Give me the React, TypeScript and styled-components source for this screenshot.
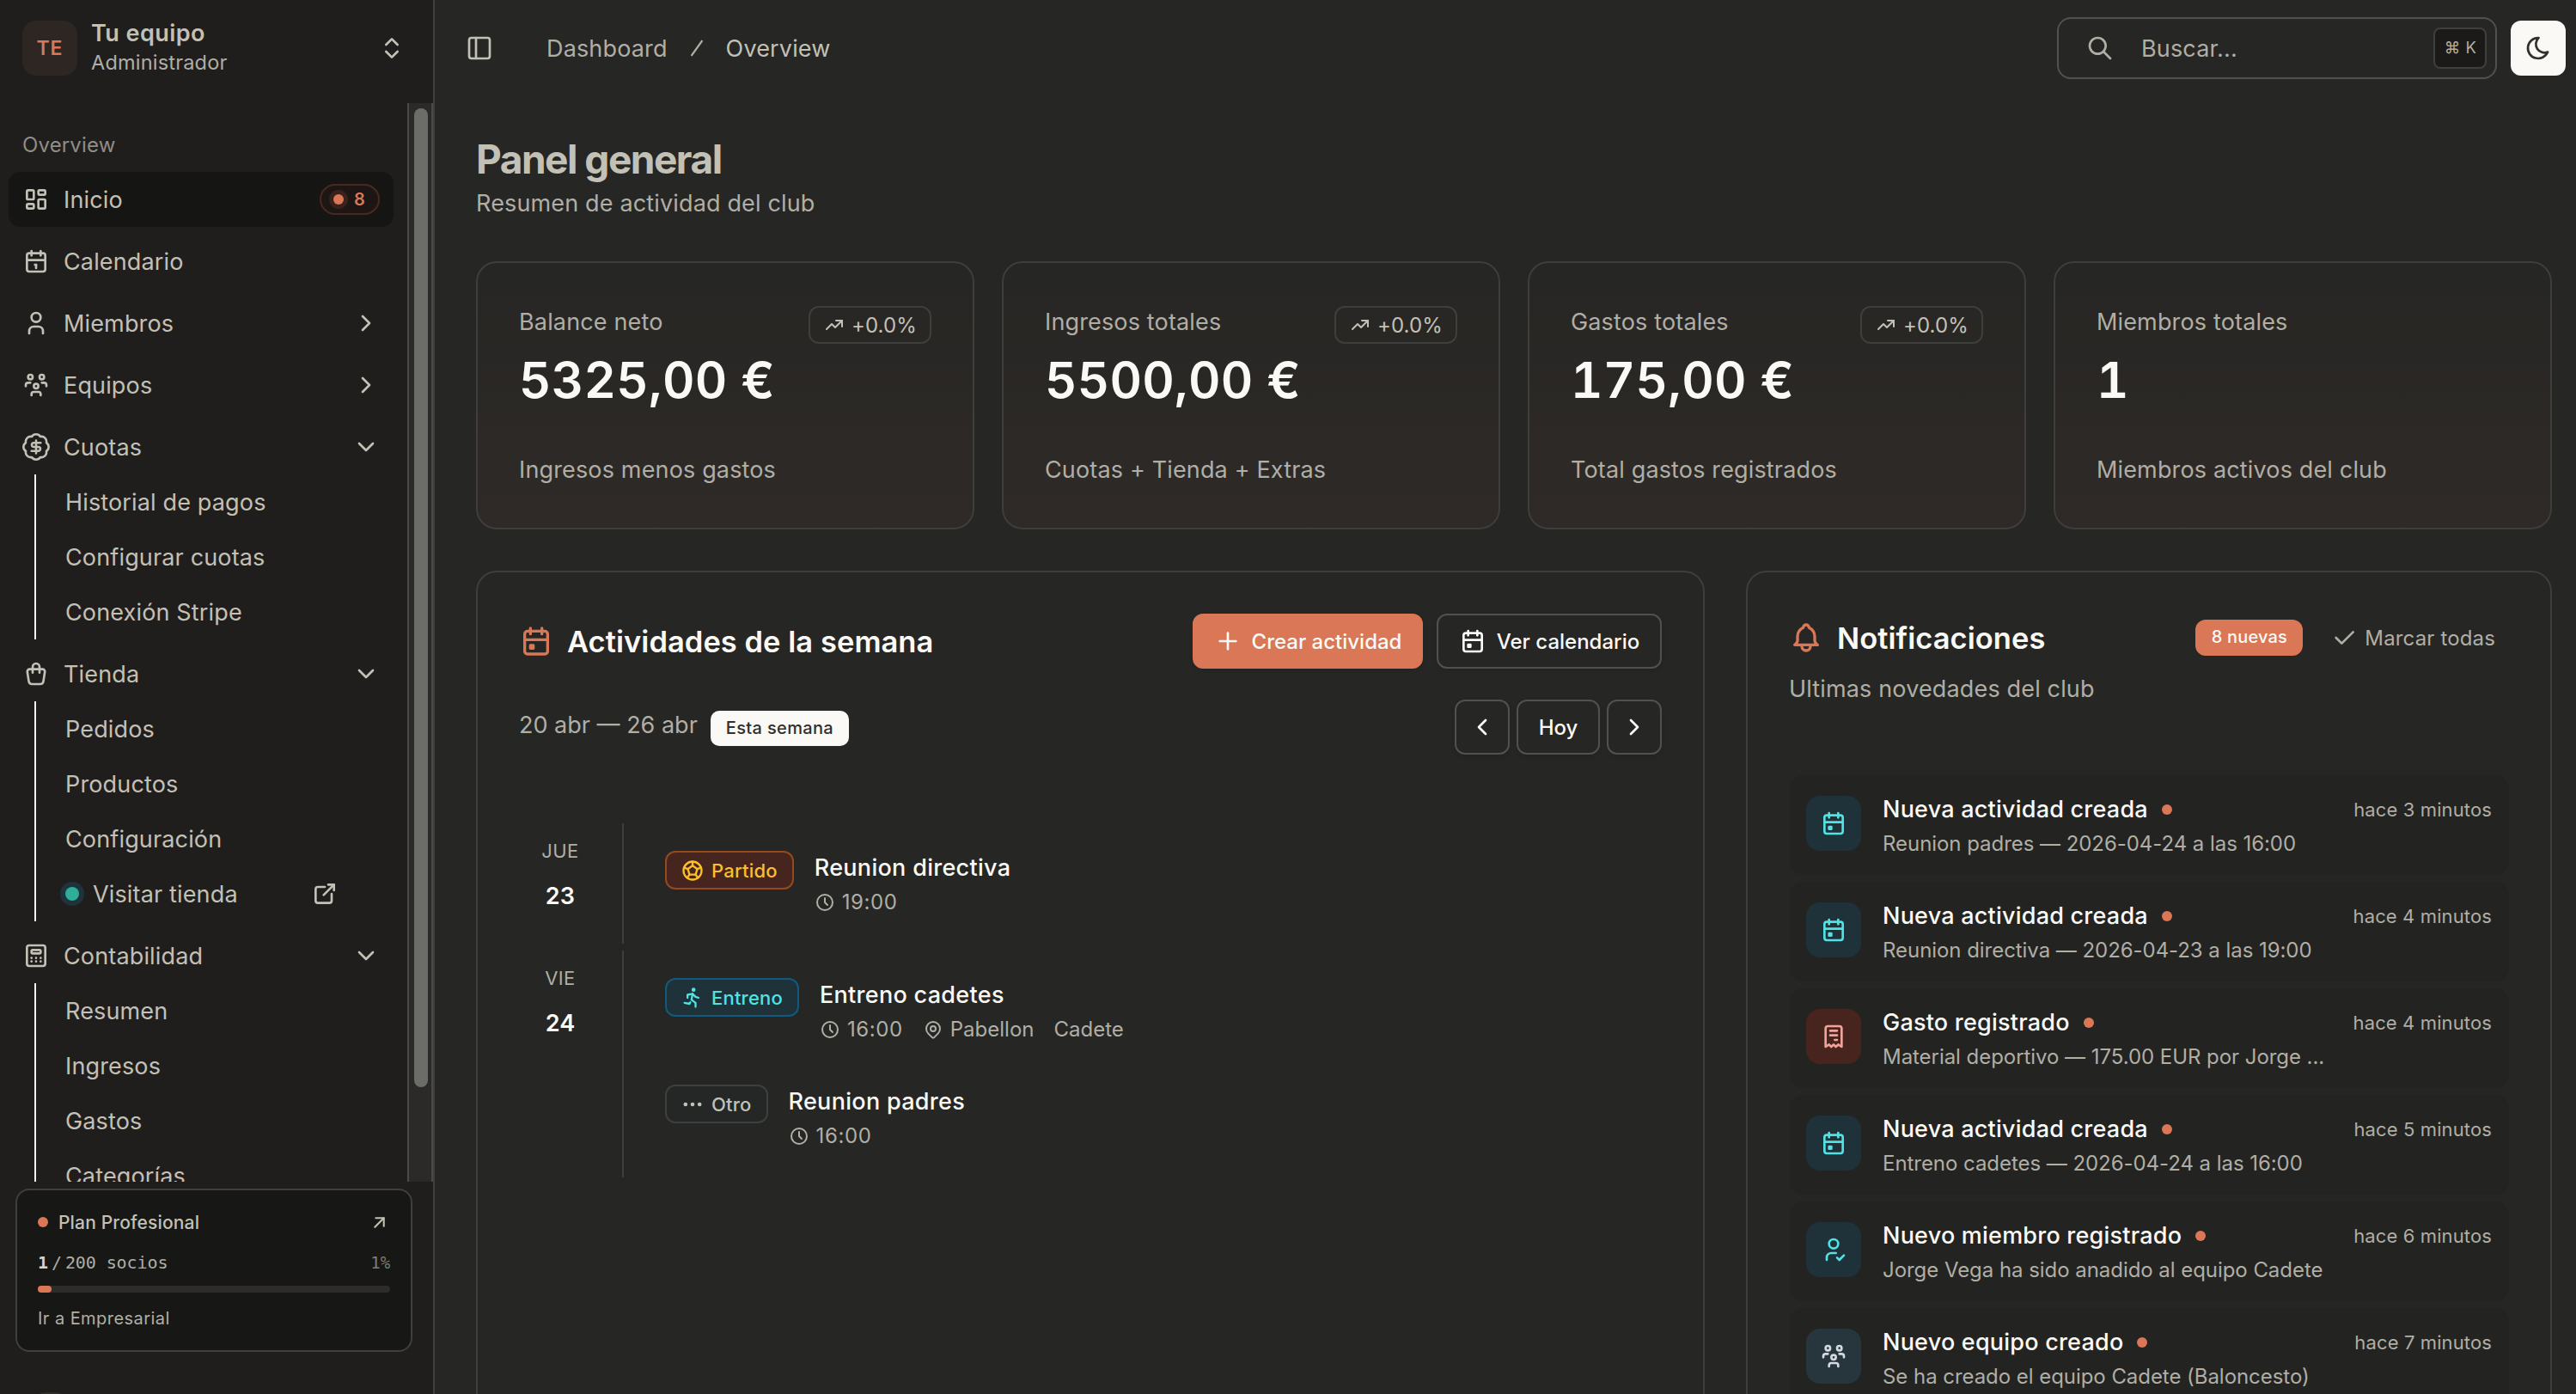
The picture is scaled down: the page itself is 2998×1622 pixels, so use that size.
import React, { ReactNode } from 'react'
import styled, { createGlobalStyle, css } from 'styled-components'
import { ChevronDown, ChevronLeft, ChevronRight, ChevronsUpDown, PanelLeft } from 'lucide-react'
import {
  TbArrowUpRight,
  TbBallFootball,
  TbBell,
  TbCalculator,
  TbCalendar,
  TbCalendarEvent,
  TbCheck,
  TbClock,
  TbDots,
  TbExternalLink,
  TbLayoutDashboard,
  TbMapPin,
  TbMoon,
  TbPlus,
  TbReceipt,
  TbRun,
  TbSearch,
  TbShoppingBag,
  TbSlash,
  TbTrendingUp,
  TbUser,
  TbUserCheck,
  TbUsersGroup,
} from 'react-icons/tb'

type Tone = 'cyan' | 'red' | 'slate'
type Kind = 'match' | 'training' | 'other'

interface NavEntry {
  label: string
  icon: ReactNode
  active?: boolean
  count?: number
  chevron?: 'right' | 'down'
  items?: { label: string; external?: boolean }[]
}

interface Activity {
  kind: Kind
  title: string
  time: string
  place?: string
  team?: string
}

const DollarBadge = () => (
  <svg width={32} height={32} viewBox="0 0 24 24" fill="none" stroke="currentColor" overflow="visible" strokeLinecap="round" strokeLinejoin="round">
    <path
      transform="translate(12 12) scale(1.1) translate(-12 -12)"
      strokeWidth={1.75}
      d="M3.85 8.62a4 4 0 0 1 4.78-4.77 4 4 0 0 1 6.74 0 4 4 0 0 1 4.78 4.78 4 4 0 0 1 0 6.74 4 4 0 0 1-4.77 4.78 4 4 0 0 1-6.75 0 4 4 0 0 1-4.78-4.77 4 4 0 0 1 0-6.76Z"
    />
    <path strokeWidth={1.9} d="M16 8.5h-6a1.75 1.75 0 1 0 0 3.5h4a1.75 1.75 0 1 1 0 3.5H8M12 17.6V6.4" />
  </svg>
)

const nav: NavEntry[] = [
  { label: 'Inicio', icon: <TbLayoutDashboard size={32} />, active: true, count: 8 },
  { label: 'Calendario', icon: <TbCalendar size={32} /> },
  { label: 'Miembros', icon: <TbUser size={32} />, chevron: 'right' },
  { label: 'Equipos', icon: <TbUsersGroup size={32} />, chevron: 'right' },
  {
    label: 'Cuotas',
    icon: <DollarBadge />,
    chevron: 'down',
    items: [{ label: 'Historial de pagos' }, { label: 'Configurar cuotas' }, { label: 'Conexión Stripe' }],
  },
  {
    label: 'Tienda',
    icon: <TbShoppingBag size={32} />,
    chevron: 'down',
    items: [{ label: 'Pedidos' }, { label: 'Productos' }, { label: 'Configuración' }, { label: 'Visitar tienda', external: true }],
  },
  {
    label: 'Contabilidad',
    icon: <TbCalculator size={32} />,
    chevron: 'down',
    items: [{ label: 'Resumen' }, { label: 'Ingresos' }, { label: 'Gastos' }, { label: 'Categorías' }],
  },
]

const stats = [
  { label: 'Balance neto', value: '5325,00 €', note: 'Ingresos menos gastos', trend: '+0.0%' },
  { label: 'Ingresos totales', value: '5500,00 €', note: 'Cuotas + Tienda + Extras', trend: '+0.0%' },
  { label: 'Gastos totales', value: '175,00 €', note: 'Total gastos registrados', trend: '+0.0%' },
  { label: 'Miembros totales', value: '1', note: 'Miembros activos del club' },
]

const days: { name: string; day: number; activities: Activity[] }[] = [
  { name: 'JUE', day: 23, activities: [{ kind: 'match', title: 'Reunion directiva', time: '19:00' }] },
  {
    name: 'VIE',
    day: 24,
    activities: [
      { kind: 'training', title: 'Entreno cadetes', time: '16:00', place: 'Pabellon', team: 'Cadete' },
      { kind: 'other', title: 'Reunion padres', time: '16:00' },
    ],
  },
]

const kinds = {
  match: { label: 'Partido', icon: <TbBallFootball size={28} /> },
  training: { label: 'Entreno', icon: <TbRun size={28} /> },
  other: { label: 'Otro', icon: <TbDots size={28} /> },
}

const notifications: { title: string; text: string; time: string; tone: Tone; icon: ReactNode }[] = [
  { title: 'Nueva actividad creada', text: 'Reunion padres — 2026-04-24 a las 16:00', time: 'hace 3 minutos', tone: 'cyan', icon: <TbCalendarEvent size={32} /> },
  { title: 'Nueva actividad creada', text: 'Reunion directiva — 2026-04-23 a las 19:00', time: 'hace 4 minutos', tone: 'cyan', icon: <TbCalendarEvent size={32} /> },
  { title: 'Gasto registrado', text: 'Material deportivo — 175.00 EUR por Jorge ...', time: 'hace 4 minutos', tone: 'red', icon: <TbReceipt size={32} /> },
  { title: 'Nueva actividad creada', text: 'Entreno cadetes — 2026-04-24 a las 16:00', time: 'hace 5 minutos', tone: 'cyan', icon: <TbCalendarEvent size={32} /> },
  { title: 'Nuevo miembro registrado', text: 'Jorge Vega ha sido anadido al equipo Cadete', time: 'hace 6 minutos', tone: 'cyan', icon: <TbUserCheck size={32} /> },
  { title: 'Nuevo equipo creado', text: 'Se ha creado el equipo Cadete (Baloncesto)', time: 'hace 7 minutos', tone: 'slate', icon: <TbUsersGroup size={32} /> },
]

const Sidebar = () => (
  <SidebarContainer>
    <TeamSwitcher>
      <TeamAvatar>TE</TeamAvatar>
      <TeamText>
        <TeamName>Tu equipo</TeamName>
        <TeamRole>Administrador</TeamRole>
      </TeamText>
      <ChevronsUpDown size={32} />
    </TeamSwitcher>

    <ScrollArea>
      <NavList>
        <NavLabel>Overview</NavLabel>
        {nav.map((entry) => (
          <li key={entry.label}>
            <NavButton $active={entry.active}>
              {entry.icon}
              <span>{entry.label}</span>
              {entry.count && (
                <CountPill>
                  <PulseDot />
                  {entry.count}
                </CountPill>
              )}
              {entry.chevron === 'right' && <ChevronRight size={32} />}
              {entry.chevron === 'down' && <ChevronDown size={32} />}
            </NavButton>
            {entry.items && (
              <SubList>
                {entry.items.map((item) => (
                  <SubItem key={item.label} $external={item.external}>
                    {item.external && <LiveDot />}
                    <span>{item.label}</span>
                    {item.external && <TbExternalLink size={32} />}
                  </SubItem>
                ))}
              </SubList>
            )}
          </li>
        ))}
      </NavList>
      <ScrollTrack>
        <ScrollThumb />
      </ScrollTrack>
    </ScrollArea>

    <PlanCard>
      <PlanHead>
        <Dot />
        <span>Plan Profesional</span>
        <TbArrowUpRight size={25} />
      </PlanHead>
      <PlanUsage>
        <strong>1</strong>
        <span>/</span>
        <span>200 socios</span>
        <em>1%</em>
      </PlanUsage>
      <PlanBar>
        <PlanFill />
      </PlanBar>
      <PlanLink>Ir a Empresarial</PlanLink>
    </PlanCard>
    <UserRow />
  </SidebarContainer>
)

const Header = () => (
  <HeaderBar>
    <PanelLeft size={32} />
    <Breadcrumb>
      <span>Dashboard</span>
      <TbSlash size={28} />
      <Current>Overview</Current>
    </Breadcrumb>
    <SearchBox>
      <TbSearch size={32} />
      <span>Buscar...</span>
      <Kbd>⌘ K</Kbd>
    </SearchBox>
    <ThemeButton>
      <TbMoon size={32} />
    </ThemeButton>
  </HeaderBar>
)

const WeekPanel = () => (
  <Panel>
    <WeekHead>
      <PanelTitle>
        <TbCalendarEvent size={40} />
        Actividades de la semana
      </PanelTitle>
      <ButtonRow $gap={16}>
        <Button $primary $width={268}>
          <TbPlus size={32} />
          Crear actividad
        </Button>
        <Button $width={262}>
          <TbCalendarEvent size={32} />
          Ver calendario
        </Button>
      </ButtonRow>
    </WeekHead>
    <WeekNav>
      <WeekRange>
        20 abr — 26 abr
        <WeekPill>Esta semana</WeekPill>
      </WeekRange>
      <ButtonRow $gap={8}>
        <Button $width={64}>
          <ChevronLeft size={32} />
        </Button>
        <Button $width={97}>Hoy</Button>
        <Button $width={64}>
          <ChevronRight size={32} />
        </Button>
      </ButtonRow>
    </WeekNav>
    <Timeline>
      {days.map(({ name, day, activities }) => (
        <DayBlock key={day}>
          <DayLabel>
            <DayName>{name}</DayName>
            <DayNumber>{day}</DayNumber>
          </DayLabel>
          <DayActivities>
            {activities.map(({ kind, title, time, place, team }) => (
              <ActivityItem key={title}>
                <KindBadge $kind={kind}>
                  {kinds[kind].icon}
                  {kinds[kind].label}
                </KindBadge>
                <div>
                  <ActivityTitle>{title}</ActivityTitle>
                  <ActivityMeta>
                    <Meta $digits>
                      <TbClock size={24} />
                      {time}
                    </Meta>
                    {place && (
                      <Meta>
                        <TbMapPin size={24} />
                        {place}
                      </Meta>
                    )}
                    {team && <Meta>{team}</Meta>}
                  </ActivityMeta>
                </div>
              </ActivityItem>
            ))}
          </DayActivities>
        </DayBlock>
      ))}
    </Timeline>
  </Panel>
)

const NotificationsPanel = () => (
  <Panel>
    <NotifHead>
      <PanelTitle>
        <TbBell size={40} />
        Notificaciones
      </PanelTitle>
      <NewBadge>8 nuevas</NewBadge>
      <MarkAll>
        <TbCheck size={32} />
        Marcar todas
      </MarkAll>
    </NotifHead>
    <NotifSubtitle>Ultimas novedades del club</NotifSubtitle>
    <NotifList>
      {notifications.map(({ title, text, time, tone, icon }, index) => (
        <NotifItem key={index}>
          <NotifIcon $tone={tone}>{icon}</NotifIcon>
          <NotifBody>
            <NotifTitle>
              {title}
              <Dot />
            </NotifTitle>
            <NotifText>{text}</NotifText>
          </NotifBody>
          <NotifTime>{time}</NotifTime>
        </NotifItem>
      ))}
    </NotifList>
  </Panel>
)

const App = () => {
  return (
    <Layout>
      <GlobalStyle />
      <Sidebar />
      <Main>
        <Header />
        <Content>
          <PageTitle>Panel general</PageTitle>
          <PageSubtitle>Resumen de actividad del club</PageSubtitle>
          <StatGrid>
            {stats.map(({ label, value, note, trend }) => (
              <StatCard key={label}>
                <StatLabel>{label}</StatLabel>
                <StatValue>{value}</StatValue>
                <StatNote>{note}</StatNote>
                {trend && (
                  <TrendBadge>
                    <TbTrendingUp size={24} />
                    {trend}
                  </TrendBadge>
                )}
              </StatCard>
            ))}
          </StatGrid>
          <PanelGrid>
            <WeekPanel />
            <NotificationsPanel />
          </PanelGrid>
        </Content>
      </Main>
    </Layout>
  )
}

const GlobalStyle = createGlobalStyle`
  * {
    box-sizing: border-box;
  }

  body {
    margin: 0;
    background: #262624;
    color: #c3c0b6;
    font-family: Inter, 'Liberation Sans', sans-serif;
    font-size: 27px;
    letter-spacing: 0.15px;
    -webkit-font-smoothing: antialiased;
  }

  h1, h2, p, ul {
    margin: 0;
    padding: 0;
  }

  ul {
    list-style: none;
  }

  svg {
    flex: none;
  }
`

const Layout = styled.div`
  display: flex;
  height: 1622px;
  overflow: hidden;
  white-space: nowrap;
`

/* sidebar */
const SidebarContainer = styled.aside`
  display: flex;
  flex-direction: column;
  flex: none;
  width: 506px;
  border-right: 2px solid #3f3f3b;
  background: #1f1e1d;
`
const TeamSwitcher = styled.div`
  display: flex;
  align-items: center;
  flex: none;
  height: 120px;
  padding: 0 32px 8px 26px;
`
const TeamAvatar = styled.div`
  display: flex;
  align-items: center;
  justify-content: center;
  width: 64px;
  height: 64px;
  border-radius: 16px;
  background: #2e2623;
  color: #d97757;
  font-size: 23px;
  font-weight: 600;
  letter-spacing: 1px;
`
const TeamText = styled.div`
  flex: 1;
  padding: 0 0 3px 16px;
`
const TeamName = styled.div`
  font-weight: 600;
  line-height: 36px;
  letter-spacing: 0.45px;
`
const TeamRole = styled.div`
  color: #b0aea5;
  font-size: 23.5px;
  letter-spacing: 0.2px;
  line-height: 32px;
`
const ScrollArea = styled.div`
  display: flex;
  flex: none;
  height: 1255px;
  overflow: hidden;
`
const NavList = styled.ul`
  display: flex;
  flex-direction: column;
  gap: 8px;
  flex: 1;
  padding: 16px 16px 0 10px;
`
const NavLabel = styled.li`
  height: 56px;
  padding-left: 16px;
  color: #8f8d85;
  font-size: 24px;
  line-height: 65px;
`
const NavButton = styled.div<{ $active?: boolean }>`
  display: flex;
  align-items: center;
  gap: 16px;
  height: 64px;
  padding: 0 16px;
  border-radius: 14px;
  background: ${({ $active }) => ($active ? '#151513' : 'transparent')};

  > span {
    flex: 1;
  }
`
const CountPill = styled.div`
  display: flex;
  align-items: center;
  gap: 12px;
  width: 70px;
  height: 36px;
  padding-left: 14px;
  border: 2px solid #4a2822;
  border-radius: 18px;
  background: #1c1715;
  color: #d97757;
  font-size: 20px;
  font-weight: 600;
`
const Dot = styled.i`
  flex: none;
  width: 12px;
  height: 12px;
  border-radius: 50%;
  background: #d97757;
`
const PulseDot = styled(Dot)`
  box-shadow: 0 0 0 5px #3a211b;
`
const SubList = styled.ul`
  margin-left: 30px;
  border-left: 2px solid #f4f2ec;
`
const SubItem = styled.li<{ $external?: boolean }>`
  display: flex;
  align-items: center;
  height: 64px;
  padding: 0 64px 0 34px;

  span {
    flex: 1;
    padding-left: ${({ $external }) => ($external ? 16 : 0)}px;
  }
`
const LiveDot = styled.i`
  width: 16px;
  height: 16px;
  border-radius: 50%;
  background: #2eae98;
  box-shadow: 0 0 0 6px #1e333b;
`
const ScrollTrack = styled.div`
  width: 30px;
  padding: 6px 6px 0;
  border: 2px solid #4b4a46;
  border-width: 0 2px;
  background: #2b2a28;
`
const ScrollThumb = styled.div`
  width: 16px;
  height: 1139px;
  margin: 0 auto;
  border-radius: 8px;
  background: #6c6c69;
`
const PlanCard = styled.section`
  flex: none;
  width: 462px;
  height: 190px;
  margin: 8px 0 0 18px;
  padding: 22px 24px;
  border: 2px solid #3f3f3b;
  border-radius: 16px;
  background: #171715;
`
const PlanHead = styled.div`
  display: flex;
  align-items: center;
  gap: 12px;
  height: 30px;
  font-size: 21px;
  font-weight: 500;
  letter-spacing: 0.15px;

  span {
    flex: 1;
  }
`
const PlanUsage = styled.div`
  display: flex;
  gap: 4px;
  height: 28px;
  margin-top: 18px;
  color: #b0aea5;
  font-family: 'DejaVu Sans Mono', monospace;
  font-size: 20px;
  letter-spacing: -0.1px;
  line-height: 28px;

  strong {
    color: #d6d3c9;
  }

  em {
    margin-left: auto;
    color: #7f7d76;
    font-size: 19px;
    font-style: normal;
  }
`
const PlanBar = styled.div`
  height: 8px;
  margin-top: 13px;
  border-radius: 4px;
  background: #2d2c2a;
`
const PlanFill = styled.div`
  width: 16px;
  height: 8px;
  border-radius: 4px;
  background: #d97757;
`
const PlanLink = styled.div`
  margin-top: 16px;
  color: #b0aea5;
  font-size: 20px;
  letter-spacing: 0.45px;
  line-height: 28px;
`
const UserRow = styled.div`
  flex: none;
  width: 42px;
  height: 42px;
  margin: 47px 0 0 38px;
  border-radius: 16px;
  background: #2e2d2a;
`

/* header */
const Main = styled.main`
  flex: 1;
  min-width: 0;
`
const HeaderBar = styled.header`
  display: flex;
  align-items: center;
  height: 112px;
  padding: 0 12px 0 36px;
`
const Breadcrumb = styled.nav`
  display: flex;
  align-items: center;
  gap: 20px;
  margin-right: auto;
  padding-left: 62px;
  color: #b0aea5;
  letter-spacing: 0.15px;
`
const Current = styled.span`
  color: #c3c0b6;
`
const SearchBox = styled.div`
  display: flex;
  align-items: center;
  width: 512px;
  height: 72px;
  padding: 0 10px 0 32px;
  border: 2px solid #52514d;
  border-radius: 16px;
  color: #b0aea5;

  > span {
    flex: 1;
    padding-left: 32px;
    letter-spacing: 0.15px;
  }
`
const Kbd = styled.kbd`
  width: 62px;
  height: 48px;
  padding-left: 1px;
  border: 2px solid #3f3f3b;
  border-radius: 8px;
  background: #1b1a18;
  font-family: Inter, sans-serif;
  font-size: 18.5px;
  letter-spacing: 0.5px;
  line-height: 43px;
  text-align: center;
`
const ThemeButton = styled.button`
  display: flex;
  align-items: center;
  justify-content: center;
  width: 64px;
  height: 64px;
  margin-left: 16px;
  padding: 0;
  border: 0;
  border-radius: 12px;
  background: #faf9f5;
  color: #30302e;
`

/* content */
const Content = styled.div`
  padding: 43px 28px 0 48px;
`
const PageTitle = styled.h1`
  font-size: 46px;
  font-weight: 700;
  letter-spacing: -1.5px;
  line-height: 60px;
`
const PageSubtitle = styled.p`
  color: #b0aea5;
  line-height: 43px;
`
const StatGrid = styled.section`
  display: grid;
  grid-template-columns: repeat(4, 1fr);
  gap: 32px;
  margin-top: 46px;
`
const StatCard = styled.article`
  display: grid;
  grid-template-columns: 1fr auto;
  grid-template-rows: 40px 72px 40px;
  row-gap: 12px;
  height: 312px;
  padding: 48px;
  border: 2px solid #3e3e3b;
  border-radius: 24px;
  background: linear-gradient(to top, #2f2a27, #262624);
  color: #b0aea5;
  line-height: 41px;
`
const StatLabel = styled.div``
const StatValue = styled.div`
  grid-row: 2;
  color: #faf9f5;
  font-size: 58px;
  font-weight: 600;
  font-variant-numeric: tabular-nums;
  letter-spacing: 0.25px;
  line-height: 73px;
`
const StatNote = styled.div`
  grid-row: 3;
  margin-top: 36px;
`
const TrendBadge = styled.div`
  display: flex;
  align-items: center;
  gap: 8px;
  grid-row: 1;
  grid-column: 2;
  width: 143px;
  height: 44px;
  margin-top: 2px;
  padding-left: 16px;
  border: 2px solid #3e3e3b;
  border-radius: 12px;
  color: #c3c0b6;
  font-size: 24px;
  letter-spacing: 0.1px;
`
const PanelGrid = styled.div`
  display: grid;
  grid-template-columns: 1430px 938px;
  gap: 48px;
  margin-top: 48px;
`
const Panel = styled.section`
  height: 1100px;
  padding: 48px;
  border: 2px solid #3e3e3b;
  border-radius: 24px;
`
const PanelTitle = styled.h2`
  display: flex;
  align-items: center;
  gap: 16px;
  color: #faf9f5;
  font-size: 34.5px;
  font-weight: 600;
  letter-spacing: 0.04px;

  svg {
    color: #d97757;
  }
`

/* week panel */
const WeekHead = styled.div`
  display: flex;
  align-items: center;
  justify-content: space-between;
  height: 64px;
`
const ButtonRow = styled.div<{ $gap: number }>`
  display: flex;
  gap: ${({ $gap }) => $gap}px;
`
const Button = styled.button<{ $width: number; $primary?: boolean }>`
  display: flex;
  align-items: center;
  justify-content: center;
  gap: 12px;
  width: ${({ $width }) => $width}px;
  height: 64px;
  padding: 0;
  border: 2px solid #52514d;
  border-radius: 12px;
  background: transparent;
  box-shadow: 0 2px 4px rgba(0, 0, 0, 0.1);
  color: #faf9f5;
  font-family: inherit;
  font-size: 24px;
  font-weight: 500;
  letter-spacing: 0;

  ${({ $primary }) =>
    $primary &&
    css`
      border-color: #d97757;
      background: #d97757;
    `}
`
const WeekNav = styled.div`
  display: flex;
  justify-content: space-between;
  height: 64px;
  margin-top: 36px;
`
const WeekRange = styled.div`
  display: flex;
  height: 60px;
  color: #b0aea5;
  letter-spacing: 0;
  line-height: 60px;
`
const WeekPill = styled.span`
  height: 41px;
  margin: 13px 0 0 15px;
  padding: 0 18px;
  border-radius: 10px;
  background: #faf9f5;
  color: #30302e;
  font-size: 20px;
  font-weight: 500;
  letter-spacing: 0.34px;
  line-height: 40px;
`
const Timeline = styled.div`
  display: flex;
  flex-direction: column;
  gap: 8px;
  margin-top: 80px;
`
const DayBlock = styled.div`
  display: flex;
`
const DayLabel = styled.div`
  width: 96px;
  padding-top: 16px;
  text-align: center;
`
const DayName = styled.div`
  color: #b0aea5;
  font-size: 22px;
  letter-spacing: 0.4px;
  line-height: 32px;
`
const DayNumber = styled.div`
  margin-top: 16px;
  color: #faf9f5;
  font-weight: 600;
  line-height: 41px;
`
const DayActivities = styled.div`
  display: flex;
  flex-direction: column;
  gap: 16px;
  flex: 1;
  margin-left: 24px;
  padding: 16px 0 16px 48px;
  border-left: 2px solid #3e3e3b;
`
const ActivityItem = styled.div`
  display: flex;
  align-items: flex-start;
  gap: 24px;
  padding: 16px 0;
`
const KindBadge = styled.div<{ $kind: Kind }>`
  display: flex;
  align-items: center;
  gap: 8px;
  height: 45px;
  padding: 0 17px 0 16px;
  border: 2px solid;
  border-radius: 12px;
  font-size: 22px;
  font-weight: 500;
  letter-spacing: 0.2px;

  ${({ $kind }) =>
    ({
      match: css`
        border-color: #96481f;
        background: #47251f;
        color: #fcbf2a;
      `,
      training: css`
        border-color: #105a80;
        background: #1f323a;
        color: #4fe3e3;
      `,
      other: css`
        border-color: #3e403e;
        background: #242726;
        color: #c3c0b6;
      `,
    })[$kind]}
`
const ActivityTitle = styled.div`
  color: #faf9f5;
  font-weight: 500;
  letter-spacing: 0.3px;
  line-height: 40px;
`
const ActivityMeta = styled.div`
  display: flex;
  gap: 23px;
  margin-top: 4px;
`
const Meta = styled.span<{ $digits?: boolean }>`
  display: flex;
  align-items: center;
  gap: 8px;
  color: #b0aea5;
  font-size: 24px;
  letter-spacing: ${({ $digits }) => ($digits ? 0.6 : 0)}px;
  line-height: 32px;
`

/* notifications */
const NotifHead = styled.div`
  display: flex;
  align-items: center;
  height: 56px;
`
const NewBadge = styled.span`
  width: 125px;
  height: 42px;
  margin-left: auto;
  border-radius: 12px;
  background: #d97757;
  color: #faf9f5;
  font-size: 20px;
  font-weight: 500;
  line-height: 41px;
  text-align: center;
`
const MarkAll = styled.span`
  display: flex;
  align-items: center;
  gap: 8px;
  padding: 0 16px 0 32px;
  color: #b0aea5;
  font-size: 24px;
  letter-spacing: 0.15px;
`
const NotifSubtitle = styled.p`
  margin-top: 12px;
  color: #b0aea5;
  line-height: 40px;
`
const NotifList = styled.div`
  display: flex;
  flex-direction: column;
  gap: 8px;
  margin-top: 80px;
`
const NotifItem = styled.article`
  display: flex;
  height: 116px;
  padding: 20px;
  border-radius: 16px;
  background: #232321;
  line-height: 40px;
`
const NotifIcon = styled.div<{ $tone: Tone }>`
  display: flex;
  align-items: center;
  justify-content: center;
  width: 64px;
  height: 64px;
  margin-top: 4px;
  border-radius: 16px;
  background: ${({ $tone }) => ({ cyan: '#1f323a', red: '#48241f', slate: '#27353d' })[$tone]};
  color: ${({ $tone }) => ({ cyan: '#4fe3e3', red: '#f0a399', slate: '#d3dade' })[$tone]};
`
const NotifBody = styled.div`
  flex: 1;
  padding-left: 25px;
`
const NotifTitle = styled.div`
  display: flex;
  align-items: center;
  gap: 16px;
  color: #faf9f5;
  font-weight: 500;
  letter-spacing: 0.22px;
`
const NotifText = styled.div`
  color: #b0aea5;
  font-size: 24px;
  letter-spacing: -0.05px;
`
const NotifTime = styled.time`
  color: #b0aea5;
  font-size: 22px;
  letter-spacing: 0.12px;
`

export default App
